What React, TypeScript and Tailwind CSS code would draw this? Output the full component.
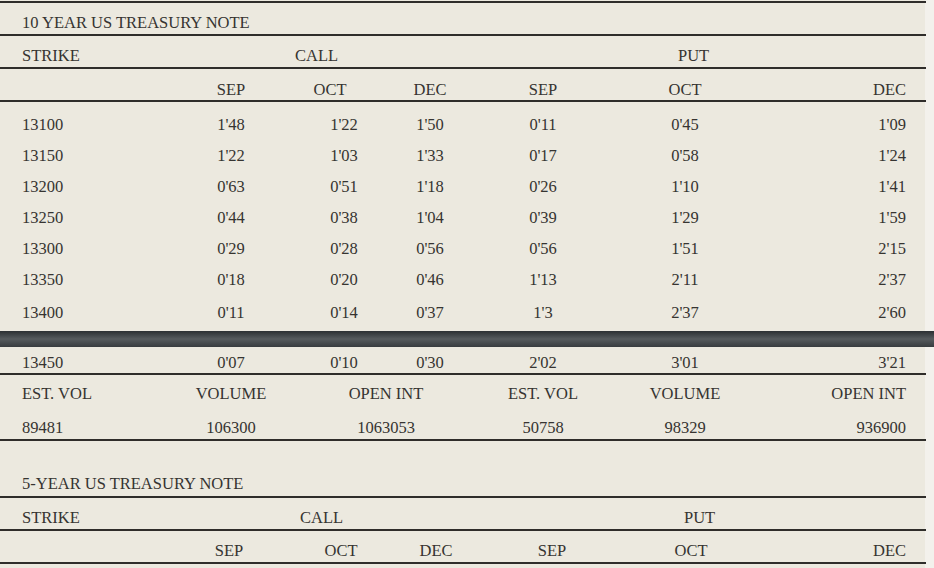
import React from "react"

const ROWS = [
  ["13100", "1'48", "1'22", "1'50", "0'11", "0'45", "1'09"],
  ["13150", "1'22", "1'03", "1'33", "0'17", "0'58", "1'24"],
  ["13200", "0'63", "0'51", "1'18", "0'26", "1'10", "1'41"],
  ["13250", "0'44", "0'38", "1'04", "0'39", "1'29", "1'59"],
  ["13300", "0'29", "0'28", "0'56", "0'56", "1'51", "2'15"],
  ["13350", "0'18", "0'20", "0'46", "1'13", "2'11", "2'37"],
  ["13400", "0'11", "0'14", "0'37", "1'3", "2'37", "2'60"],
]

const LAST = ["13450", "0'07", "0'10", "0'30", "2'02", "3'01", "3'21"]

function Rule() {
  return <div className="h-[2px] w-[926px] bg-[#2f2d2a]" />
}

function DataRow({ cells, className }: { cells: string[]; className: string }) {
  return (
    <div className={`grid grid-cols-[190px_82px_116px_84px_142px_142px_169px] items-center ${className}`}>
      <div className="pl-[22px]">{cells[0]}</div>
      <div className="text-center">{cells[1]}</div>
      <div className="pl-[28px] text-center">{cells[2]}</div>
      <div className="text-center">{cells[3]}</div>
      <div className="text-center">{cells[4]}</div>
      <div className="text-center">{cells[5]}</div>
      <div className="pr-[19px] text-right">{cells[6]}</div>
    </div>
  )
}

export default function App() {
  return (
    <div
      className="h-[568px] w-[934px] overflow-hidden bg-[#f3f1ec] text-[16.5px] text-[#363431] oldstyle-nums"
      style={{ fontFamily: '"Liberation Serif", Georgia, serif' }}
    >
      <div className="w-[925px] bg-[#ece9df] pt-px">
        <Rule />
        <div className="flex h-[31px] items-center pl-[22px] pt-[9px]">10 YEAR US TREASURY NOTE</div>
        <Rule />
        <div className="flex h-[31px] items-center pt-[9px]">
          <div className="w-[295px] pl-[22px]">STRIKE</div>
          <div className="w-[383px]">CALL</div>
          <div>PUT</div>
        </div>
        <Rule />
        <div className="grid h-[31px] grid-cols-[190px_82px_116px_84px_142px_142px_169px] items-center pt-[9px]">
          <div />
          <div className="text-center">SEP</div>
          <div className="text-center">OCT</div>
          <div className="text-center">DEC</div>
          <div className="text-center">SEP</div>
          <div className="text-center">OCT</div>
          <div className="pr-[19px] text-right">DEC</div>
        </div>
        <Rule />
        <div className="pb-[4px] pt-[8px]">
          {ROWS.map((r, i) => (
            <DataRow key={r[0]} cells={r} className={i === ROWS.length - 1 ? "h-[31px] pt-[4px]" : "h-[31px]"} />
          ))}
        </div>
      </div>

      <div className="h-[16px] w-full bg-gradient-to-b from-[#2c3033] via-[#565b5e] to-[#383c3f]" />

      <div className="w-[925px] bg-[#ece9df]">
        <DataRow cells={LAST} className="h-[26px] pt-[4px]" />
        <Rule />
        <div className="grid h-[36px] grid-cols-[155px_152px_158px_156px_128px_176px] items-center pt-[2px]">
          <div className="pl-[22px]">EST. VOL</div>
          <div className="text-center">VOLUME</div>
          <div className="text-center">OPEN INT</div>
          <div className="text-center">EST. VOL</div>
          <div className="text-center">VOLUME</div>
          <div className="pr-[19px] text-right">OPEN INT</div>
        </div>
        <div className="grid h-[28px] grid-cols-[155px_152px_158px_156px_128px_176px] items-start pt-[5px]">
          <div className="pl-[22px]">89481</div>
          <div className="text-center">106300</div>
          <div className="text-center">1063053</div>
          <div className="text-center">50758</div>
          <div className="text-center">98329</div>
          <div className="pr-[19px] text-right">936900</div>
        </div>
        <Rule />

        <div className="h-[26px]" />
        <div className="flex h-[29px] items-center pl-[22px] pt-[6px]">5-YEAR US TREASURY NOTE</div>
        <Rule />
        <div className="flex h-[31px] items-center pt-[9px]">
          <div className="w-[300px] pl-[22px]">STRIKE</div>
          <div className="w-[384px]">CALL</div>
          <div>PUT</div>
        </div>
        <Rule />
        <div className="grid h-[31px] grid-cols-[188px_82px_142px_48px_184px_94px_187px] items-center pt-[8px]">
          <div />
          <div className="text-center">SEP</div>
          <div className="text-center">OCT</div>
          <div className="text-center">DEC</div>
          <div className="text-center">SEP</div>
          <div className="text-center">OCT</div>
          <div className="pr-[19px] text-right">DEC</div>
        </div>
        <Rule />
        <div className="h-[10px]" />
      </div>
    </div>
  )
}
